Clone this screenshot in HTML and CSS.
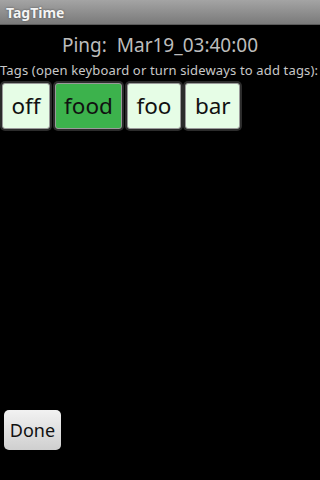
FILE: index.html
```html
<!DOCTYPE html>
<html>
<head>
<meta charset="utf-8">
<link rel="stylesheet" href="styles.css">
</head>
<body>
<div class="screen">
  <div class="titlebar">TagTime</div>
  <div class="ping">Ping:&nbsp; Mar19_03:40:00</div>
  <div class="hint">Tags (open keyboard or turn sideways to add tags):</div>
  <div class="tags">
    <div class="tag">off</div>
    <div class="tag on">food</div>
    <div class="tag">foo</div>
    <div class="tag">bar</div>
  </div>
  <div class="spacer"></div>
  <div class="footer"><div class="done">Done</div></div>
</div>
</body>
</html>
```
FILE: styles.css
```css
html, body {
  margin: 0;
  padding: 0;
  background: #000;
}
.screen {
  width: 320px;
  height: 480px;
  display: flex;
  flex-direction: column;
  font-family: "Noto Sans", "Open Sans", sans-serif;
  overflow: hidden;
}
.titlebar {
  height: 25px;
  box-sizing: border-box;
  padding-left: 6px;
  font-size: 14px;
  font-weight: bold;
  line-height: 25px;
  color: #f4f4f4;
  text-shadow: 0 0 2px #444;
  background: linear-gradient(#a4a4a4, #7a7a7a);
  border-bottom: 1px solid #5a5a5a;
}
.ping {
  margin-top: 7px;
  text-align: center;
  font-size: 19px;
  line-height: 26px;
  color: #bdbdbd;
}
.hint {
  margin-top: 3px;
  font-size: 13px;
  letter-spacing: 0.15px;
  line-height: 18px;
  color: #c8c8c8;
  white-space: nowrap;
}
.tags {
  display: flex;
  gap: 0;
  padding: 2px 0 0 0;
}
.tag {
  height: 46px;
  padding: 0 8.5px;
  box-sizing: border-box;
  background: #e6fde6;
  color: #111;
  font-size: 22.5px;
  line-height: 44px;
  border: 1px solid #9a9a9a;
  border-radius: 3px;
  box-shadow: 0 0 0 2px #2c2c2c;
  margin: 2px 2.5px 2px 2px;
}
.tag.on {
  background: #3cb24c;
}
.spacer {
  flex: 1;
}
.footer {
  padding: 0 0 30px 4px;
}
.done {
  display: inline-block;
  width: 57px;
  height: 40px;
  box-sizing: border-box;
  text-align: center;
  font-size: 18px;
  line-height: 40px;
  color: #111;
  border-radius: 5px;
  background: linear-gradient(#f2f2f2, #cfcfcf);
}
```
